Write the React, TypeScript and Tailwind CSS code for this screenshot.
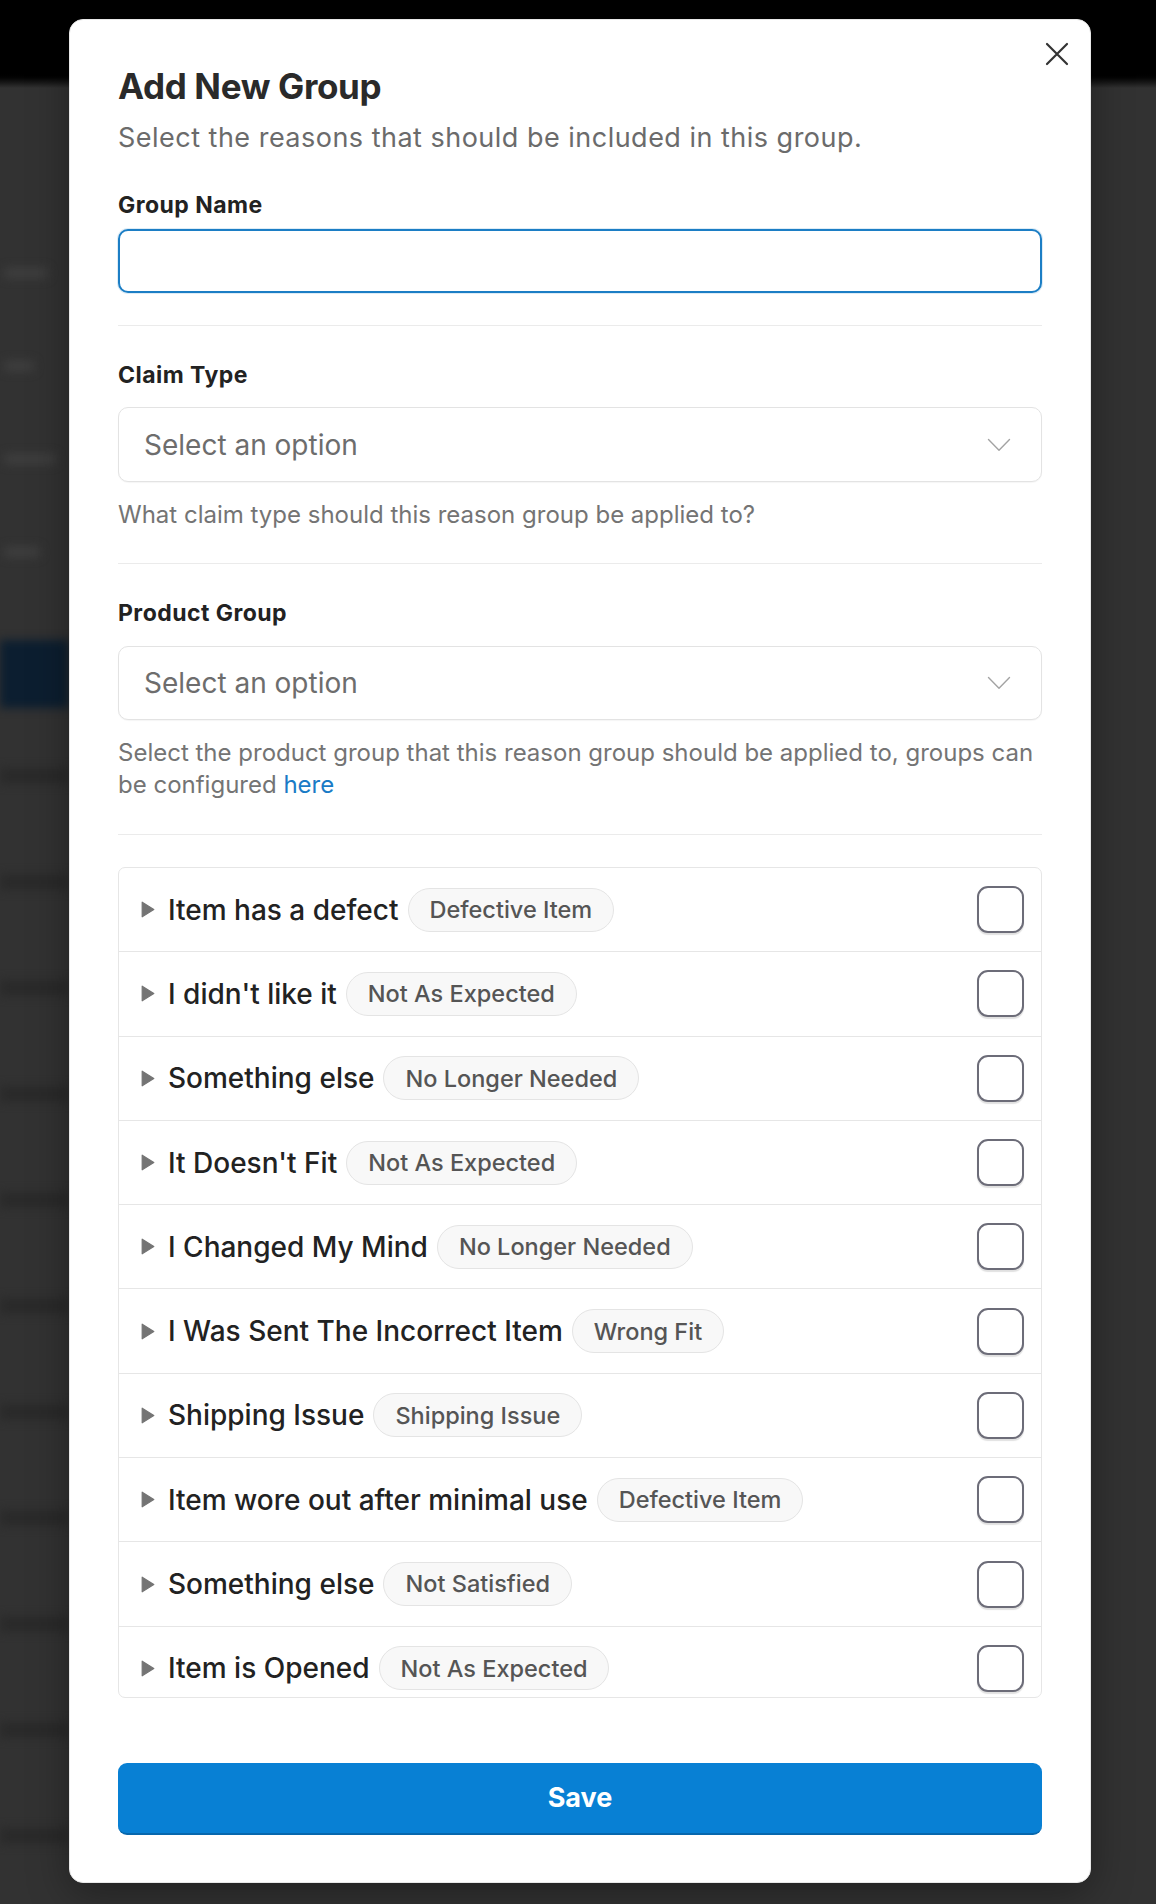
import React from "react";

const rows: [string, string][] = [
  ["Item has a defect", "Defective Item"],
  ["I didn't like it", "Not As Expected"],
  ["Something else", "No Longer Needed"],
  ["It Doesn't Fit", "Not As Expected"],
  ["I Changed My Mind", "No Longer Needed"],
  ["I Was Sent The Incorrect Item", "Wrong Fit"],
  ["Shipping Issue", "Shipping Issue"],
  ["Item wore out after minimal use", "Defective Item"],
  ["Something else", "Not Satisfied"],
  ["Item is Opened", "Not As Expected"],
];

const topFragments = ["w-[44px]", "w-[30px]", "w-[52px]", "w-[36px]"];
const bottomStripes = [0, 1, 2, 3, 4, 5, 6, 7, 8, 9, 10];

function Chevron() {
  return (
    <svg width="24" height="14" viewBox="0 0 24 14" fill="none">
      <path
        d="M1.5 1.5 L12 12.2 L22.5 1.5"
        stroke="#a3a3a3"
        strokeWidth="1.4"
        strokeLinecap="round"
        strokeLinejoin="round"
      />
    </svg>
  );
}

function SelectBox({ h }: { h: string }) {
  return (
    <div
      className={`flex ${h} w-full items-center justify-between rounded-[10px] border-[1.5px] border-[#e3e3e3] bg-white pl-[25px] pr-[30px] shadow-[0_1px_1px_rgba(0,0,0,0.04)]`}
    >
      <span className="text-[28px] leading-[34px] text-[#6d6d6d]">Select an option</span>
      <Chevron />
    </div>
  );
}

function Row({ title, tag }: { title: string; tag: string }) {
  return (
    <div className="flex h-[84.3px] shrink-0 items-center border-b border-[#e6e6e6] pl-[22px] pr-[17px]">
      <svg width="14" height="17" viewBox="0 0 14 17" className="shrink-0">
        <path d="M1.2 1.2 L12.8 8.5 L1.2 15.8 Z" fill="#747474" stroke="#747474" strokeWidth="1.2" strokeLinejoin="round" />
      </svg>
      <span className="ml-[13px] whitespace-nowrap text-[28px] font-medium leading-[34px] text-[#222222]">{title}</span>
      <span className="ml-[9px] flex h-[44px] items-center whitespace-nowrap rounded-full border-[1.5px] border-[#e4e4e4] bg-[#f8f8f8] px-[21px] text-[23.5px] font-medium text-[#555555]">
        {tag}
      </span>
      <div className="ml-auto h-[47px] w-[47px] shrink-0 rounded-[11px] border-2 border-[#6c6c78] bg-white shadow-[0_1.5px_1px_rgba(0,0,0,0.12)]" />
    </div>
  );
}

export default function App() {
  return (
    <div className="relative h-[1904px] w-[1156px] overflow-hidden bg-[#323232] font-['Inter','Noto_Sans',sans-serif]">
      {/* dimmed page behind the dialog */}
      <div className="flex h-full flex-col">
        <div className="h-[72px] w-full shrink-0 bg-black" />
        <div className="h-[16px] w-full shrink-0 bg-gradient-to-b from-black to-[#323232]" />
        <div className="flex w-[69px] flex-col pt-[180px] blur-[5px]">
          <div className="flex flex-col gap-[83px] pl-[4px]">
            {topFragments.map((w, i) => (
              <div key={i} className={`h-[10px] ${w} rounded bg-[#3f3f3f]`} />
            ))}
          </div>
          <div className="mt-[83px] h-[68px] w-[69px] bg-[#0c1e30]" />
          <div className="mt-[60px] flex flex-col gap-[90px]">
            {bottomStripes.map((i) => (
              <div key={i} className="h-[16px] w-[69px] bg-[#2a2a2a]" />
            ))}
          </div>
        </div>
      </div>

      {/* dialog */}
      <div className="absolute left-[69px] top-[19px] w-[1022px] rounded-[14px] border border-[#e8e8e8] bg-white px-[48px] pb-[47px] pt-[46px] shadow-[0_10px_40px_rgba(0,0,0,0.35)]">
        <button className="absolute right-[21px] top-[22px] h-[24px] w-[24px]" aria-label="Close">
          <svg width="24" height="24" viewBox="0 0 24 24" fill="none">
            <path d="M2 2 L22 22 M22 2 L2 22" stroke="#333333" strokeWidth="2.2" strokeLinecap="round" />
          </svg>
        </button>

        <h2 className="text-[35px] font-bold leading-[41px] tracking-[-0.01em] text-[#2a2a2a]">Add New Group</h2>
        <p className="mt-[15px] text-[27px] leading-[32px] tracking-[0.018em] text-[#6b6b6b]">
          Select the reasons that should be included in this group.
        </p>

        <div className="mt-[37px] text-[23px] font-bold leading-[28px] tracking-[0.02em] text-[#222222]">Group Name</div>
        <div className="mt-[10px] h-[64px] w-full rounded-[10px] border-[2.5px] border-[#1c7ec5] bg-white shadow-[0_0_0_1px_rgba(28,126,197,0.15)]" />

        <div className="mt-[32px] h-px w-full bg-[#ebebeb]" />

        <div className="mt-[35px] text-[23px] font-bold leading-[28px] tracking-[0.02em] text-[#222222]">Claim Type</div>
        <div className="mt-[18px]">
          <SelectBox h="h-[75px]" />
        </div>
        <p className="mt-[17px] text-[24px] leading-[32px] text-[#747474]">
          What claim type should this reason group be applied to?
        </p>

        <div className="mt-[32px] h-px w-full bg-[#ebebeb]" />

        <div className="mt-[35px] text-[23px] font-bold leading-[28px] tracking-[0.02em] text-[#222222]">Product Group</div>
        <div className="mt-[19px]">
          <SelectBox h="h-[74px]" />
        </div>
        <p className="mt-[17px] text-[24px] leading-[32px] text-[#747474]">
          <span className="whitespace-nowrap">Select the product group that this reason group should be applied to, groups can</span>
          <br />
          be configured <a className="text-[#1a7bc6]">here</a>
        </p>

        <div className="mt-[33px] h-px w-full bg-[#ebebeb]" />

        <div className="mt-[32px] flex h-[831px] flex-col overflow-hidden rounded-[7px] border border-[#e6e6e6]">
          {rows.map(([t, g], i) => (
            <Row key={i} title={t} tag={g} />
          ))}
        </div>

        <button className="mt-[65px] flex h-[72px] w-full items-center justify-center rounded-[9px] border-b-2 border-[#0767ad] bg-[#0880d4] text-[27px] font-bold text-white">
          Save
        </button>
      </div>
    </div>
  );
}
